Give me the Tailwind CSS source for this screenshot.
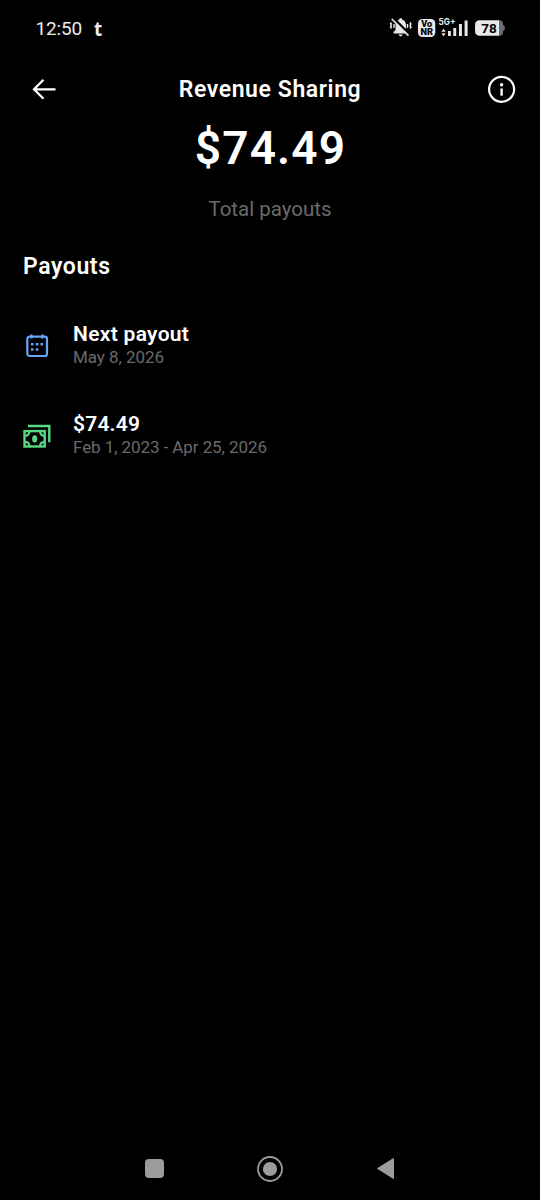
<!DOCTYPE html>
<html lang="en">
<head>
<meta charset="utf-8">
<meta name="viewport" content="width=device-width, initial-scale=1">
<title>Revenue Sharing</title>
<script src="https://cdn.jsdelivr.net/npm/@tailwindcss/browser@4"></script>
</head>
<body class="bg-black">
<div class="flex h-[1200px] w-[540px] flex-col overflow-hidden bg-black font-['Roboto',sans-serif] text-white">
  <!-- Status bar -->
  <div class="flex h-14 items-center justify-between pr-[35px] pl-[35.5px]">
    <div class="flex items-center gap-[12px] pt-px text-[19px] leading-6 text-[#ececec]">
      <span class="tracking-[-0.15px]">12:50</span>
      <span class="font-['Noto_Sans',sans-serif] text-[19px] font-bold">t</span>
    </div>
    <svg class="h-[26px] w-[117px]" viewBox="388 15 117 26" fill="#e8e8e8">
      <path d="M393.500 33.500v-1.500l2-2v-4.800c0-3 1.600-5 4-5.700v-1.300h2.400v1.300c2.500.7 4.100 2.700 4.100 5.700v4.800l2 2v1.500z"/>
      <path d="M398.500 34.600h4.200q-.5 1.800-2.100 1.800t-2.100-1.800z"/>
      <path d="M391.500 22.500l-1 1.500 1 1.500-1 1.500 1 1.500M394 24v4M410 22.500l1 1.500-1 1.500 1 1.500-1 1.500M407.500 24v4" fill="none" stroke="#e8e8e8" stroke-width="1.400"/>
      <path d="M393.500 18.500L410 35" stroke="#000" stroke-width="3"/>
      <path d="M391.800 19L408.500 35.600" stroke="#e8e8e8" stroke-width="1.700"/>
      <rect x="418" y="19" width="17.300" height="18" rx="4.500"/>
      <g fill="#000" font-family="Roboto, sans-serif" font-weight="900" font-size="8.500" text-anchor="middle">
        <text x="426.700" y="27.200" textLength="11" lengthAdjust="spacingAndGlyphs">Vo</text>
        <text x="426.700" y="35.300" textLength="12.500" lengthAdjust="spacingAndGlyphs">NR</text>
      </g>
      <text x="438.500" y="25" font-size="9" font-family="Inter, sans-serif" font-weight="700" textLength="17" lengthAdjust="spacingAndGlyphs">5G+</text>
      <path d="M441.300 31.800l2.200-3 2.200 3zM441.300 33.300h4.400l-2.200 3z"/>
      <path d="M448 31h2.900v5h-2.900zM453.300 28h2.900v8h-2.900zM459 24h2.900v12h-2.900zM464.600 20.500h3v15.500h-3z"/>
      <path d="M498 20.300h1.500q3.500 0 3.500 4v.5q2 1 2 3.200t-2 3.200v.6q0 4-3.500 4h-1.500z" fill="#6b6b6b"/>
      <path d="M480 20.300h19v15.500h-19q-5 0-5-5v-5.500q0-5 5-5z"/>
      <text x="489" y="32.900" font-size="13.500" font-family="Roboto, sans-serif" font-weight="700" text-anchor="middle" fill="#000">78</text>
    </svg>
  </div>

  <!-- App bar -->
  <header class="flex h-[66px] items-center justify-between px-6">
    <div class="flex w-[34px] justify-end"><svg class="size-7" viewBox="0 0 28 28" fill="none" stroke="#fff" stroke-width="2.300"><path d="M25.500 14.300H4M13.500 4.800L4 14.300l9.500 9.500"/></svg></div>
    <h1 class="pt-[2px] text-[23px] leading-7 font-semibold tracking-[0.58px]">Revenue Sharing</h1>
    <div class="flex w-[34px] justify-end"><svg class="size-7" viewBox="0 0 28 28" fill="none" stroke="#fff" stroke-width="2.200"><circle cx="13.600" cy="14.300" r="12.500"/><path d="M13.600 13.500v7.200" stroke-width="2.400"/><circle cx="13.600" cy="9.700" r="1.700" fill="#fff" stroke="none"/></svg></div>
  </header>

  <!-- Total -->
  <section class="flex flex-col items-center">
    <div class="h-[60px] pl-px text-[46px] leading-[52px] font-semibold tracking-[1.15px]">$74.49</div>
    <div class="mt-[13px] h-[29px] text-[20.5px] leading-7 text-[#6a6a6a]">Total payouts</div>
  </section>

  <!-- Payout list -->
  <section class="px-[23px] pt-[29px]">
    <h2 class="text-[23px] leading-7 font-semibold tracking-[0.58px]">Payouts</h2>
    <div class="mt-[38px] flex h-[52px] items-center gap-[22px]">
      <svg class="size-7" viewBox="0 0 28 28" fill="none" stroke="#66a5fa" stroke-width="2.200"><rect x="4.300" y="5.700" width="19.700" height="19.300" rx="2.300"/><path d="M8.500 3.500v4M19.500 3.500v4"/><path d="M8 13.200h2.500m2.300 0h2.500m2.200 0H20M8 18.400h2.500m2.300 0h2.500" stroke-width="2.500"/></svg>
      <div>
        <div class="text-[21px] leading-6 font-semibold tracking-[0.3px]">Next payout</div>
        <div class="text-[17px] leading-[22px] tracking-[-0.06px] text-[#6a6a6a]">May 8, 2026</div>
      </div>
    </div>
    <div class="mt-[38px] flex h-[52px] items-center gap-[22px]">
      <svg class="size-7" viewBox="0 -0.800 28 28" fill="none" stroke="#58d883" stroke-width="2.400"><path d="M5 4.200H26.300V20.500"/><rect x="1.500" y="9.300" width="20.200" height="15.400"/><path d="M2 14q4.500 0 4.500-5M21.500 14q-4.500 0-4.500-5M2 20q4.500 0 4.500 5M21.500 20q-4.500 0-4.500 5" stroke-width="2.200"/><ellipse cx="11.700" cy="17" rx="2.600" ry="3.600" fill="#58d883" stroke="none"/></svg>
      <div>
        <div class="text-[21px] leading-6 font-semibold tracking-[0.2px]">$74.49</div>
        <div class="text-[17px] leading-[22px] tracking-[-0.08px] text-[#6a6a6a]">Feb 1, 2023 - Apr 25, 2026</div>
      </div>
    </div>
  </section>

  <!-- System navigation -->
  <nav class="mt-auto flex h-[63px] items-center justify-between px-[145px]">
    <span class="size-[19px] rounded-[4px] bg-[#9c9c9c]"></span>
    <svg class="size-[26px]" viewBox="0 0 26 26" fill="#9c9c9c"><circle cx="13" cy="13" r="12" fill="none" stroke="#9c9c9c" stroke-width="1.800"/><circle cx="13" cy="13" r="7.100"/></svg>
    <svg class="h-[23px] w-[19px]" viewBox="0 0 19 23" fill="#9c9c9c" stroke="#9c9c9c" stroke-linejoin="round"><path d="M17.500 1.500v20L1.500 11.500z"/></svg>
  </nav>
</div>
</body>
</html>
